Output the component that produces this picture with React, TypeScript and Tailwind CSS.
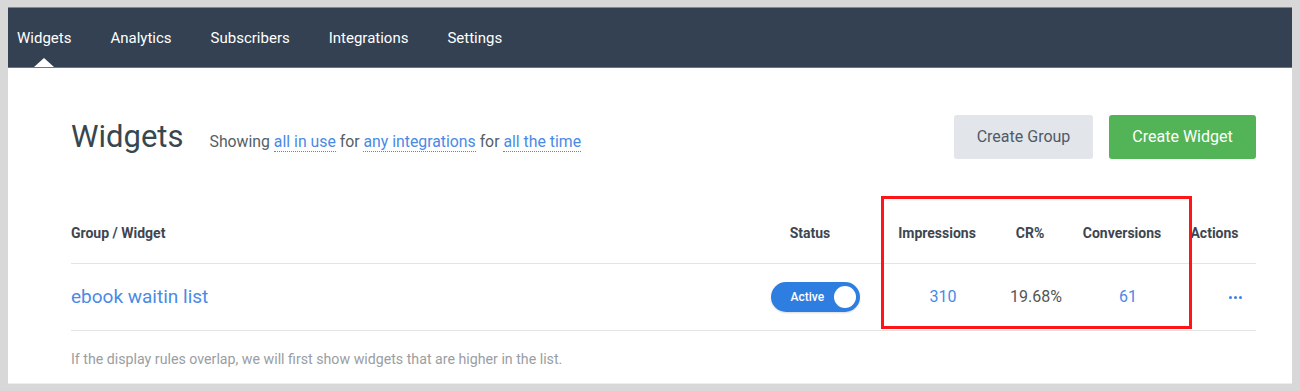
import React from 'react'

// Top navigation tabs
const tabs = ['Widgets', 'Analytics', 'Subscribers', 'Integrations', 'Settings']

function Toggle() {
  return (
    <div className="flex items-center justify-between w-[89px] h-[30px] rounded-full bg-[#2e7de1] pl-[20px] pr-[4px] shadow-[0_1px_2px_rgba(0,0,0,0.15)]">
      <span className="text-white text-[12px] font-medium">Active</span>
      <span className="w-[22px] h-[22px] rounded-full bg-white" />
    </div>
  )
}

function App() {
  return (
    <div
      className="w-[1300px] h-[391px] bg-[#d8d8d8] pl-[8px] pt-[7px] overflow-hidden"
      style={{ fontFamily: 'Roboto, "Liberation Sans", sans-serif' }}
    >
      <div className="w-[1284px] h-[377px] bg-white flex flex-col border-b border-[#eeeeee]">
        {/* 导航栏 */}
        <nav className="h-[61px] bg-[#334152] border-t border-[#5b8fd6] border-b border-b-[#6b7685] flex items-center pl-[9px] gap-[39px]">
          {tabs.map((t, i) => (
            <div key={t} className="relative h-full flex items-center">
              <span className="text-white text-[15px] mt-[2px]">{t}</span>
              {i === 0 && (
                <span className="absolute left-1/2 -translate-x-1/2 bottom-0 w-0 h-0 border-l-[10px] border-r-[10px] border-b-[9px] border-l-transparent border-r-transparent border-b-white" />
              )}
            </div>
          ))}
        </nav>

        {/* 主内容 */}
        <main className="pl-[63px] pr-[36px] pt-[47px] relative">
          <div className="flex items-center justify-between h-[44px]">
            <div className="flex items-center">
              <h1 className="text-[31px] text-[#37474f] leading-none mr-[26px] -mt-[2px]">Widgets</h1>
              <p className="text-[15.8px] text-[#555e66] mt-[10px]">
                Showing{' '}
                <span className="text-[#4a8ae6] border-b border-dotted border-[#4a8ae6]">all in use</span>{' '}
                for{' '}
                <span className="text-[#4a8ae6] border-b border-dotted border-[#4a8ae6]">any integrations</span>{' '}
                for{' '}
                <span className="text-[#4a8ae6] border-b border-dotted border-[#4a8ae6]">all the time</span>
              </p>
            </div>
            <div className="flex gap-[16px]">
              <button className="h-[44px] w-[139px] rounded-[3px] bg-[#e2e5e9] text-[#505a66] text-[16px]">Create Group</button>
              <button className="h-[44px] w-[147px] rounded-[3px] bg-[#52b456] text-white text-[16px]">Create Widget</button>
            </div>
          </div>

          {/* 表格 */}
          <div className="mt-[37px]">
            <div className="grid grid-cols-[664px_150px_104px_82px_102px_83px] h-[68px] items-end pb-[20px] border-b border-[#e4e4e4] text-[14px] leading-[20px] font-bold text-[#3d4650]">
              <div>Group / Widget</div>
              <div className="text-center">Status</div>
              <div className="text-center">Impressions</div>
              <div className="text-center">CR%</div>
              <div className="text-center">Conversions</div>
              <div className="text-center">Actions</div>
            </div>
            <div className="grid grid-cols-[664px_150px_104px_82px_102px_83px] h-[67px] items-center border-b border-[#e4e4e4]">
              <div className="text-[19px] text-[#4a8ae6]">ebook waitin list</div>
              <div className="flex justify-center pl-[10px]">
                <Toggle />
              </div>
              <div className="text-center pl-[12px] text-[16px] text-[#4a8ae6]">310</div>
              <div className="text-center pl-[12px] text-[16px] text-[#555]">19.68%</div>
              <div className="text-center pl-[12px] text-[16px] text-[#4a8ae6]">61</div>
              <div className="flex justify-end pr-[14px] gap-[2px]">
                <span className="w-[3px] h-[3px] rounded-full bg-[#3d7fe6]" />
                <span className="w-[3px] h-[3px] rounded-full bg-[#3d7fe6]" />
                <span className="w-[3px] h-[3px] rounded-full bg-[#3d7fe6]" />
              </div>
            </div>
            <p className="mt-[18px] text-[14.2px] leading-[20px] text-[#9a9ea3]">
              If the display rules overlap, we will first show widgets that are higher in the list.
            </p>
          </div>

          {/* 红色标注框 */}
          <div className="absolute left-[873px] top-[128px] w-[311px] h-[133px] border-[3px] border-[#ff1418]" />
        </main>
      </div>
    </div>
  )
}

export default App
